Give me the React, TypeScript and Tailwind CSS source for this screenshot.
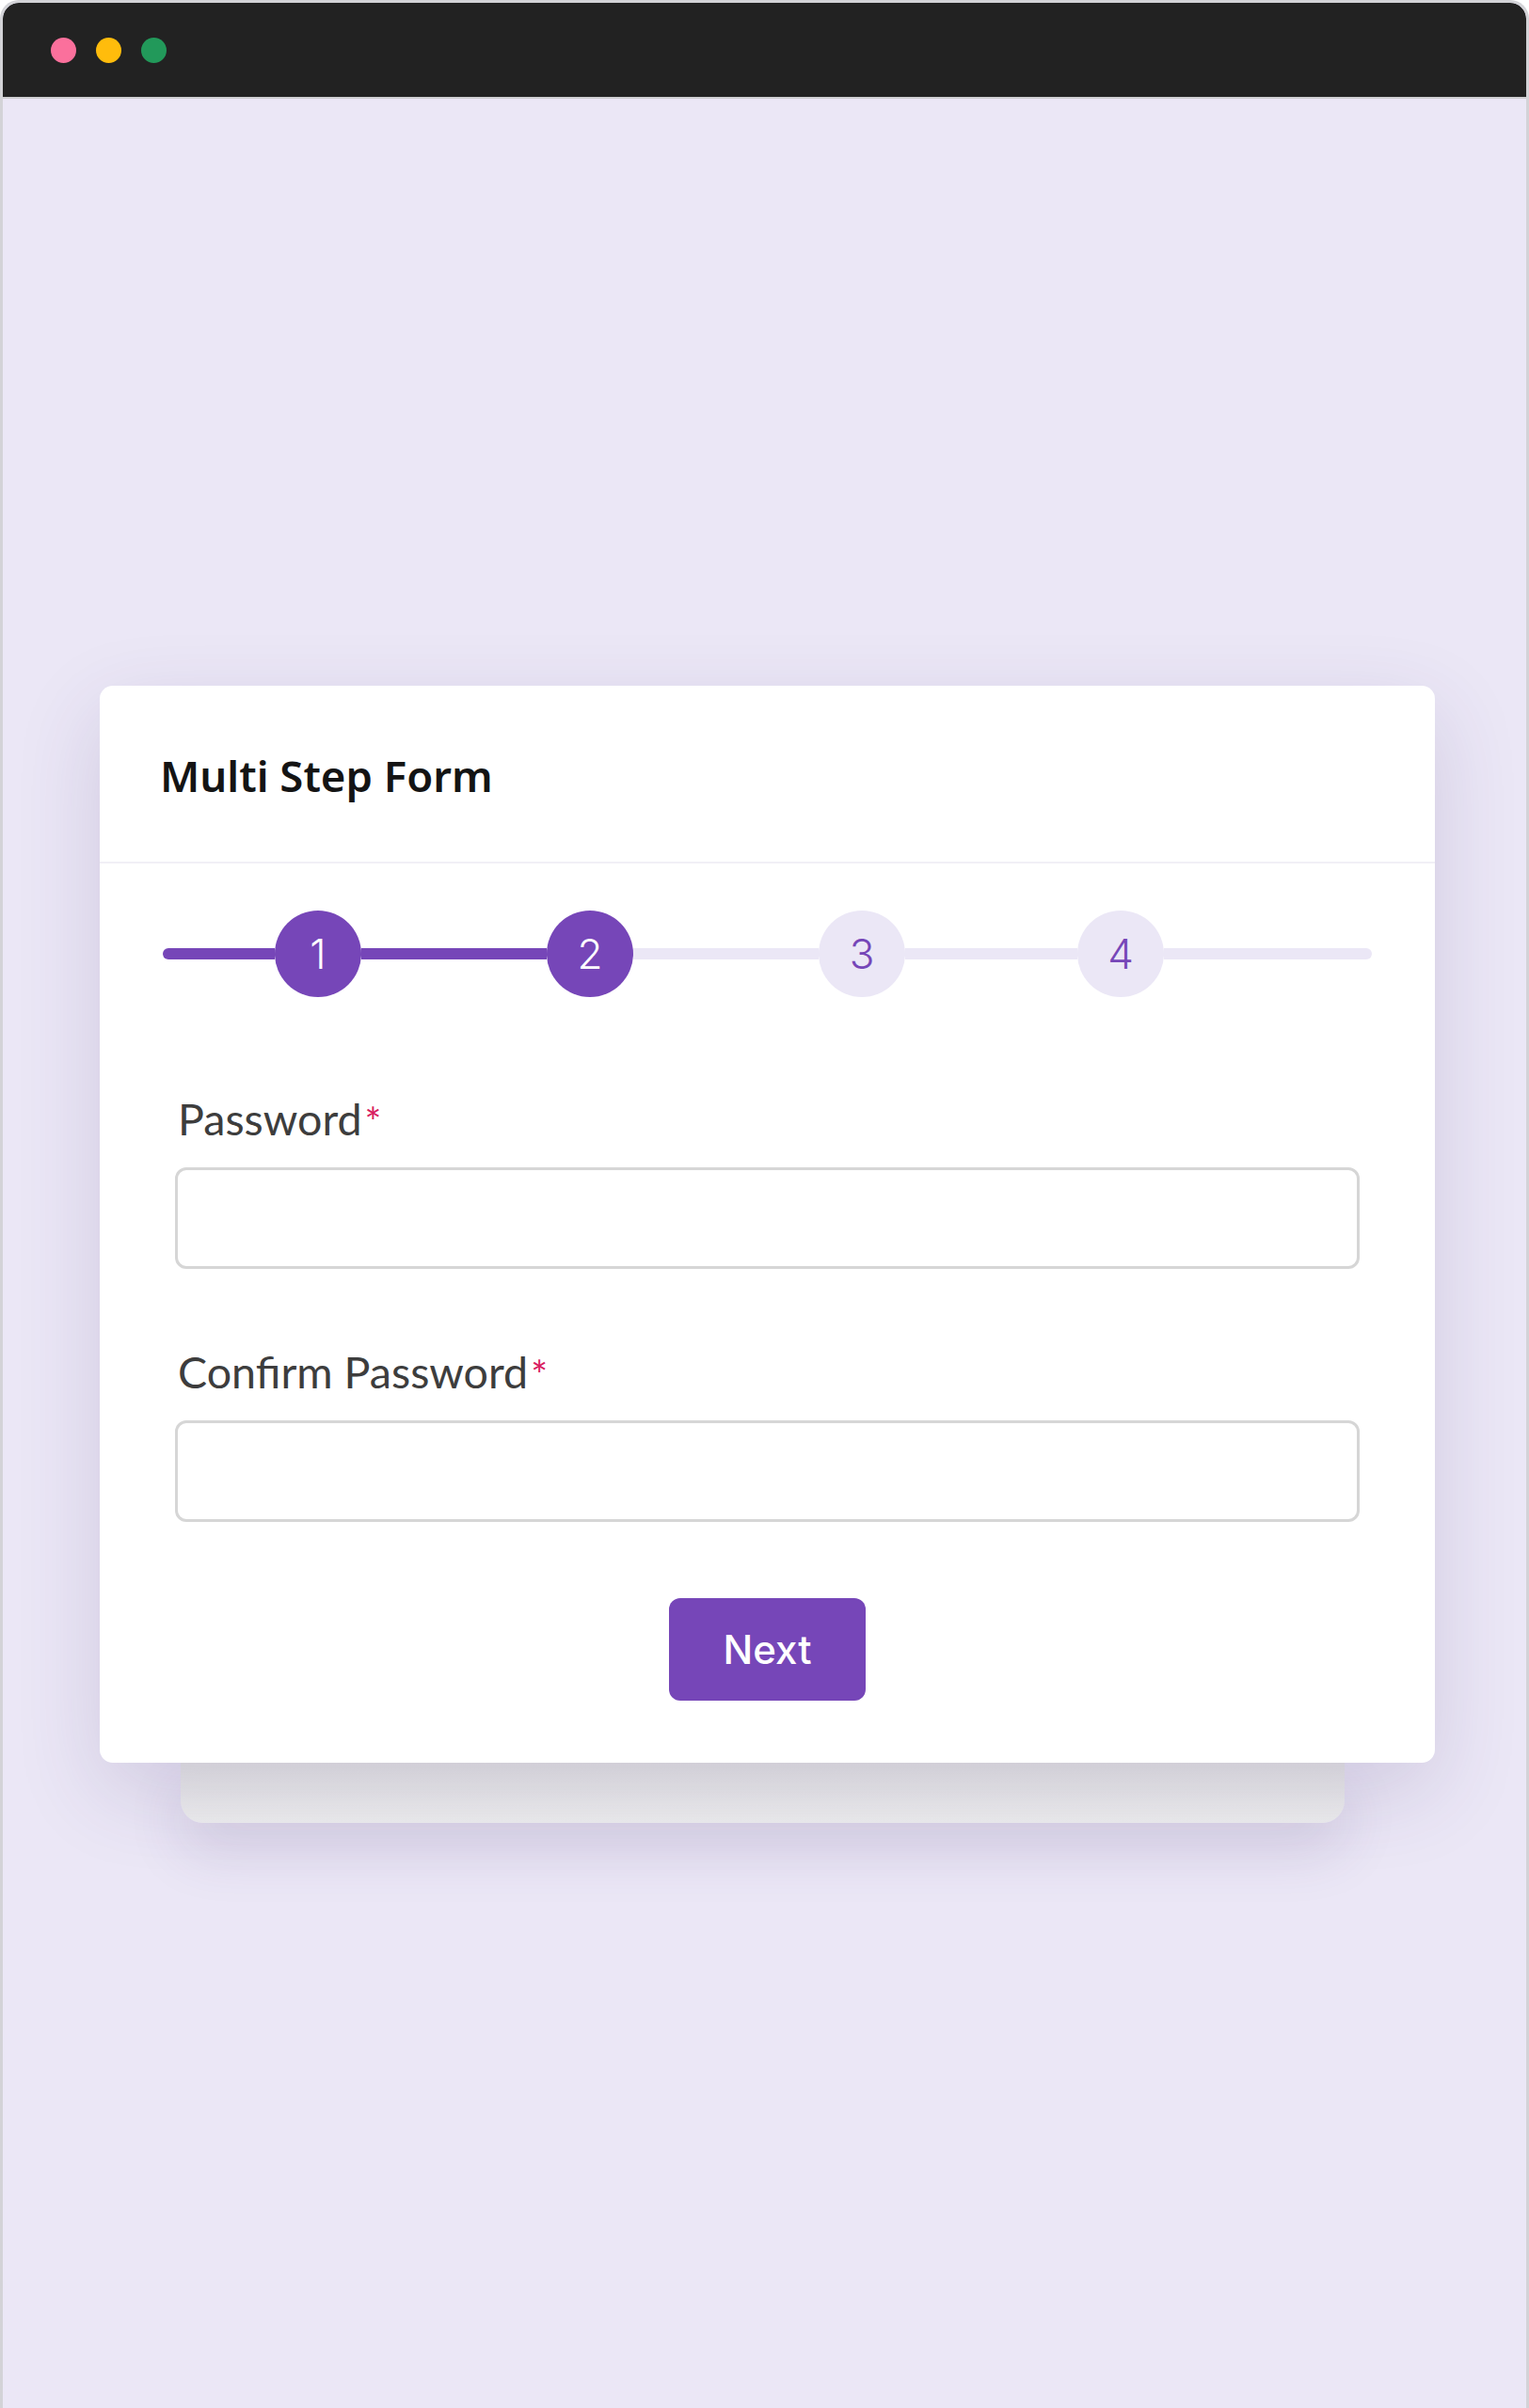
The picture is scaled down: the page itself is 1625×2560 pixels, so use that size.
import React from 'react';

interface Step {
  num: number;
  done: boolean;
}

const steps: Step[] = [
  { num: 1, done: true },
  { num: 2, done: true },
  { num: 3, done: false },
  { num: 4, done: false },
];

// widths of the track pieces between the circles, left to right
const segments = [119, 197, 197, 183, 221];

const StepCircle = ({ step }: { step: Step }) => (
  <div
    className={
      step.done
        ? 'flex h-[92px] w-[92px] shrink-0 items-center justify-center rounded-full bg-[#7646b8] text-white'
        : 'flex h-[92px] w-[92px] shrink-0 items-center justify-center rounded-full bg-[#ebe7f6] text-[#7646b8]'
    }
  >
    <span className="font-['Inter',sans-serif] text-[44px] font-light leading-none">{step.num}</span>
  </div>
);

const Stepper = ({ current }: { current: number }) => (
  <div className="flex h-[92px] items-center">
    {segments.map((w, i) => (
      <React.Fragment key={i}>
        <div
          style={{ width: w }}
          className={[
            'h-[12px] shrink-0',
            i < current ? 'bg-[#7646b8]' : 'bg-[#ebe7f6]',
            i === 0 ? 'rounded-l-full' : '',
            i === segments.length - 1 ? 'rounded-r-full' : '',
          ].join(' ')}
        />
        {steps[i] && <StepCircle step={steps[i]} />}
      </React.Fragment>
    ))}
  </div>
);

const Field = ({ label, className }: { label: string; className?: string }) => (
  <div className={className}>
    <label className="flex items-start pl-[3px] font-['Lato',sans-serif] text-[46.6px] leading-[55px] text-[#3d3d3d]">
      {label}
      <span className="ml-[3px] mt-[9px] text-[42px] leading-none text-[#d81b60]">*</span>
    </label>
    <input
      type="password"
      className="mt-[24px] block h-[108px] w-full rounded-[12px] border-[3px] border-[#d6d6d6] bg-white px-5 text-[40px] outline-none"
    />
  </div>
);

export default function App() {
  return (
    <div className="flex h-[2560px] w-full flex-col overflow-hidden rounded-t-[20px] border-x-[3px] border-t-[3px] border-[#d3d3d7] bg-[#ebe7f6]">
      {/* window title bar */}
      <div className="flex h-[102px] shrink-0 items-center gap-[21px] rounded-t-[17px] border-b-2 border-[#cfcfd2] bg-[#222222] pl-[51px]">
        <span className="h-[27px] w-[27px] rounded-full bg-[#fb709c]" />
        <span className="h-[27px] w-[27px] rounded-full bg-[#ffbc0c]" />
        <span className="h-[27px] w-[27px] rounded-full bg-[#22995a]" />
      </div>

      <div className="flex-1 pl-[103px] pt-[624px]">
        <div className="flex w-[1419px] flex-col">
          <div className="relative z-10 rounded-[14px] bg-white shadow-[0_30px_90px_rgba(70,50,110,0.16)]">
            <div className="flex h-[189px] items-center border-b-2 border-[#f1eff6] pl-[64px] pt-[5px]">
              <h1 className="font-['Noto_Sans',sans-serif] text-[45.5px] font-semibold leading-none text-[#141414]">
                Multi Step Form
              </h1>
            </div>

            <div className="px-[67px] pt-[50px]">
              <Stepper current={2} />
            </div>

            <form className="px-[80px] pb-[66px] pt-[102px]" onSubmit={(e) => e.preventDefault()}>
              <Field label="Password" />
              <Field label="Confirm Password" className="mt-[82px]" />
              <button
                type="submit"
                className="mx-auto mt-[81px] flex h-[109px] w-[209px] items-center justify-center rounded-[12px] bg-[#7646b8] font-['Inter',sans-serif] text-[42px] font-medium text-white"
              >
                Next
              </button>
            </form>
          </div>
          {/* card stacked behind */}
          <div className="ml-[86px] mr-[96px] h-[64px] rounded-b-[24px] bg-gradient-to-b from-[#e5e5e6] to-[#eeeeef] shadow-[0_30px_60px_rgba(70,50,110,0.14)]" />
        </div>
      </div>
    </div>
  );
}
